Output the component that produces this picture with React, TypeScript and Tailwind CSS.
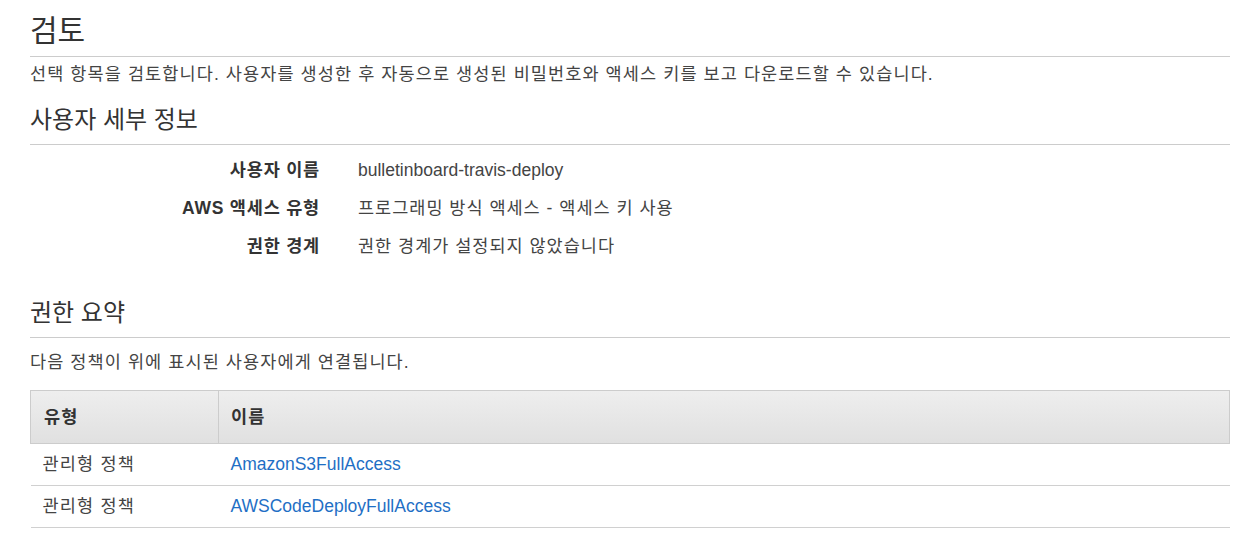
export default function App() {
  const details = [
    { label: "사용자 이름", value: "bulletinboard-travis-deploy", ko: false },
    { label: "AWS 액세스 유형", value: "프로그래밍 방식 액세스 - 액세스 키 사용", ko: true },
    { label: "권한 경계", value: "권한 경계가 설정되지 않았습니다", ko: true },
  ];
  const policies = [
    { type: "관리형 정책", name: "AmazonS3FullAccess" },
    { type: "관리형 정책", name: "AWSCodeDeployFullAccess" },
  ];

  return (
    <div
      className="min-h-[544px] bg-white px-[30px] text-[#444]"
      style={{ fontFamily: '"Liberation Sans", "Noto Sans CJK KR", sans-serif' }}
    >
      <div className="w-[1200px]">
        <h1 className="h-[57px] border-b border-[#ccc] pt-[14px] text-[30px] leading-[34px] font-normal text-[#333]">
          검토
        </h1>
        <p className="flex h-[34px] items-center text-[17.5px] tracking-[1.1px]">
          선택 항목을 검토합니다. 사용자를 생성한 후 자동으로 생성된 비밀번호와 액세스 키를 보고 다운로드할 수 있습니다.
        </p>

        <h2 className="h-[54px] border-b border-[#ccc] pt-[14px] text-[24px] leading-[30px] font-normal text-[#333]">
          사용자 세부 정보
        </h2>
        <div className="pt-[6px]">
          {details.map((d) => (
            <div key={d.label} className="flex h-[38px] items-center text-[17.5px]">
              <div className="w-[290px] text-right font-bold tracking-[0.8px] text-[#333]">{d.label}</div>
              <div className={d.ko ? "pl-[38px] tracking-[1px]" : "pl-[38px]"}>{d.value}</div>
            </div>
          ))}
        </div>

        <h2 className="h-[73px] border-b border-[#ccc] pt-[33px] text-[24px] leading-[30px] font-normal text-[#333]">
          권한 요약
        </h2>
        <p className="flex h-[48px] items-center text-[17.5px] tracking-[1.1px]">
          다음 정책이 위에 표시된 사용자에게 연결됩니다.
        </p>

        <table className="mt-[4px] w-full border-collapse text-[17.5px]">
          <thead>
            <tr className="h-[53px] bg-gradient-to-b from-[#eeeeee] to-[#e0e0e0]">
              <th className="w-[188px] border border-[#ccc] px-[13px] text-left font-bold tracking-[1.2px] text-[#333]">
                유형
              </th>
              <th className="border border-[#ccc] px-[12px] text-left font-bold tracking-[1.2px] text-[#333]">이름</th>
            </tr>
          </thead>
          <tbody>
            {policies.map((p) => (
              <tr key={p.name} className="h-[42px] border-b border-[#d0d0d0]">
                <td className="px-[12px] tracking-[1.2px]">{p.type}</td>
                <td className="px-[12px]">
                  <a href="#" className="text-[#1f6fc5]">
                    {p.name}
                  </a>
                </td>
              </tr>
            ))}
          </tbody>
        </table>
      </div>
    </div>
  );
}
